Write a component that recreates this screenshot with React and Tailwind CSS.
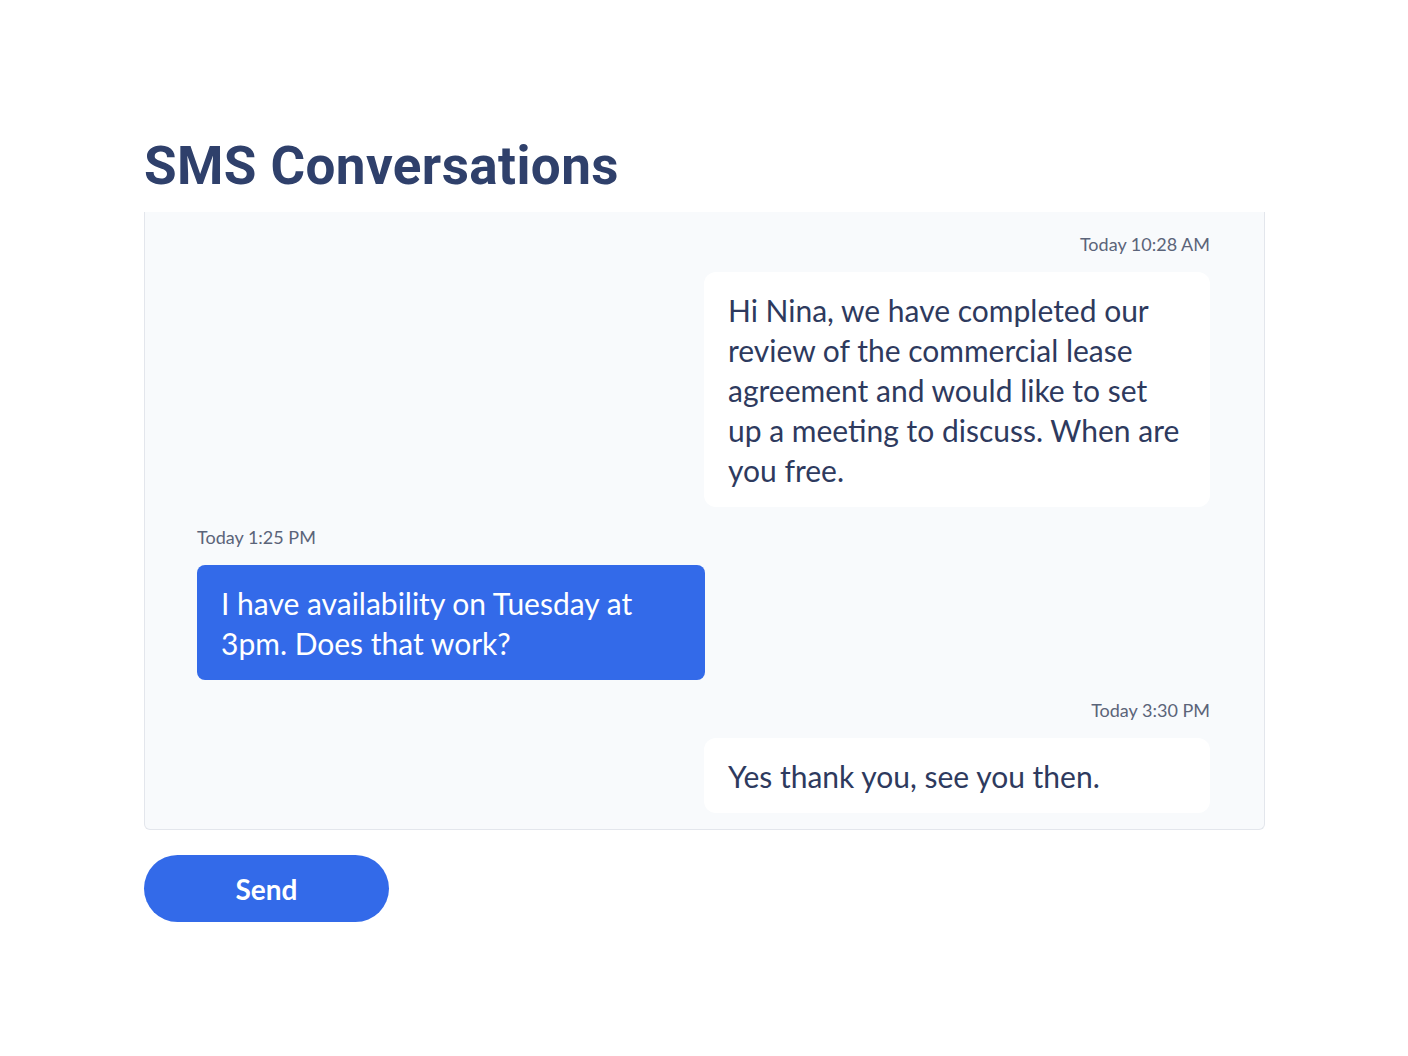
const messages = [
  {
    id: 1,
    time: 'Today 10:28 AM',
    text: 'Hi Nina, we have completed our review of the commercial lease agreement and would like to set up a meeting to discuss. When are you free.',
    mine: false,
  },
  {
    id: 2,
    time: 'Today 1:25 PM',
    text: 'I have availability on Tuesday at 3pm. Does that work?',
    mine: true,
  },
  {
    id: 3,
    time: 'Today 3:30 PM',
    text: 'Yes thank you, see you then.',
    mine: false,
  },
]

function Message({ time, text, mine }) {
  return (
    <div className={mine ? 'flex flex-col items-start' : 'flex flex-col items-end'}>
      <p className="text-[18px] leading-6 text-[#5b6479]">{time}</p>
      <div
        className={
          mine
            ? 'mt-4 w-[508px] rounded-lg bg-[#336ae9] px-6 pt-[18px] pb-[17px] text-[30px] leading-10 text-white'
            : 'mt-4 w-[506px] rounded-xl bg-white px-6 pt-[18px] pb-[17px] text-[30px] leading-10 text-[#2e3a5e]'
        }
      >
        {text}
      </div>
    </div>
  )
}

export default function App() {
  return (
    <div className="min-h-screen bg-white pt-[136px] pl-[144px]" style={{ fontFamily: 'Lato, sans-serif' }}>
      <h1
        className="text-[53px] font-bold leading-[60px] tracking-[0.4px] text-[#2f406b]"
        style={{ fontFamily: 'Roboto, sans-serif' }}
      >
        SMS Conversations
      </h1>

      {/* Conversation panel */}
      <div className="mt-4 w-[1121px] rounded-b-md border border-t-0 border-[#e3e6ec] bg-[#f8fafc] pt-5 pr-[54px] pb-4 pl-[52px]">
        <div className="flex flex-col gap-[18px]">
          {messages.map((m) => (
            <Message key={m.id} {...m} />
          ))}
        </div>
      </div>

      <button className="mt-[25px] h-[67px] w-[245px] rounded-full bg-[#336ae9] text-[28px] font-bold text-white">
        Send
      </button>
    </div>
  )
}
